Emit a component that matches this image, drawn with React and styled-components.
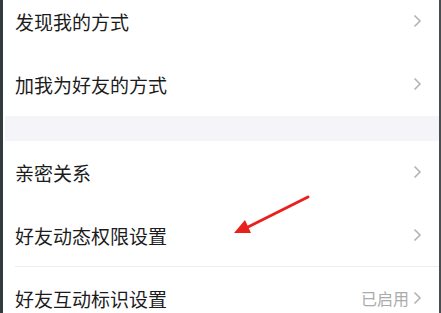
import React from "react"
import styled, { createGlobalStyle } from "styled-components"

const Global = createGlobalStyle`
  html, body {
    margin: 0;
    padding: 0;
    background: #fff;
    overflow: hidden;
  }
`

const Frame = styled.div`
  position: relative;
  width: 441px;
  height: 313px;
  box-sizing: border-box;
  border-left: 3px solid #343b3e;
  border-right: 2px solid #4a4d4f;
  background: #fff;
  overflow: hidden;
  font-family: "Noto Sans CJK SC", "Noto Sans", sans-serif;
`

const List = styled.div`
  display: flex;
  flex-direction: column;
  margin-top: -10px;
`

const Row = styled.div`
  display: flex;
  align-items: center;
  justify-content: space-between;
  height: 63px;
  padding: 0 17px 0 12px;
  box-sizing: border-box;
  border-bottom: 1px solid ${p => (p.divider ? "#ededed" : "transparent")};
  margin-left: ${p => (p.divider ? "12px" : "0")};
  padding-left: ${p => (p.divider ? "0" : "12px")};
`

const Label = styled.span`
  font-size: 19px;
  color: #1c1c1c;
`

const Right = styled.div`
  display: flex;
  align-items: center;
  gap: 3px;
`

const Status = styled.span`
  font-size: 16px;
  color: #ababab;
`

const Gap = styled.div`
  height: 25px;
  background: #f5f5f9;
  margin-left: 2px;
`

const Arrow = styled.svg`
  position: absolute;
  left: 225px;
  top: 192px;
`

const Chevron = () => (
  <svg width="10" height="14" viewBox="0 0 10 14">
    <path d="M2.5 1.5 L8 7 L2.5 12.5" fill="none" stroke="#b3b3b3" strokeWidth="1.6" />
  </svg>
)

const Item = ({ label, status, divider }) => (
  <Row divider={divider}>
    <Label>{label}</Label>
    <Right>
      {status && <Status>{status}</Status>}
      <Chevron />
    </Right>
  </Row>
)

export default function App() {
  return (
    <>
      <Global />
      <Frame>
        <List>
          <Item label="发现我的方式" />
          <Item label="加我为好友的方式" />
          <Gap />
          <Item label="亲密关系" />
          <Item label="好友动态权限设置" divider />
          <Item label="好友互动标识设置" status="已启用" />
        </List>
        <Arrow width="90" height="50" viewBox="0 0 90 50">
          <line x1="80" y1="5" x2="14" y2="38" stroke="#e8211d" strokeWidth="3" strokeLinecap="round" />
          <path d="M6 41 L17 28 L23 41 Z" fill="#e8211d" />
        </Arrow>
      </Frame>
    </>
  )
}
